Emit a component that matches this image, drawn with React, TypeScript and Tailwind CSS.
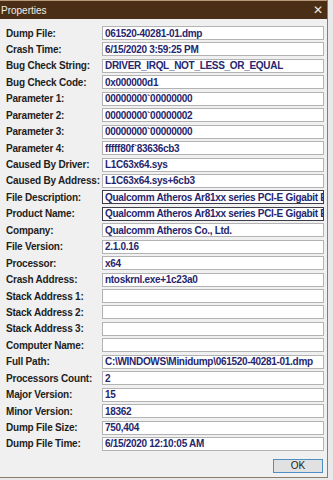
import React from "react";

const rows: [string, string, boolean?][] = [
  ["Dump File:", "061520-40281-01.dmp"],
  ["Crash Time:", "6/15/2020 3:59:25 PM"],
  ["Bug Check String:", "DRIVER_IRQL_NOT_LESS_OR_EQUAL"],
  ["Bug Check Code:", "0x000000d1"],
  ["Parameter 1:", "00000000`00000000"],
  ["Parameter 2:", "00000000`00000002"],
  ["Parameter 3:", "00000000`00000000"],
  ["Parameter 4:", "fffff80f`83636cb3"],
  ["Caused By Driver:", "L1C63x64.sys"],
  ["Caused By Address:", "L1C63x64.sys+6cb3"],
  ["File Description:", "Qualcomm Atheros Ar81xx series PCI-E Gigabit Ethernet Controller (NDIS 6.30)", true],
  ["Product Name:", "Qualcomm Atheros Ar81xx series PCI-E Gigabit Ethernet Controller (NDIS 6.30)", true],
  ["Company:", "Qualcomm Atheros Co., Ltd."],
  ["File Version:", "2.1.0.16"],
  ["Processor:", "x64"],
  ["Crash Address:", "ntoskrnl.exe+1c23a0"],
  ["Stack Address 1:", ""],
  ["Stack Address 2:", ""],
  ["Stack Address 3:", ""],
  ["Computer Name:", ""],
  ["Full Path:", "C:\\WINDOWS\\Minidump\\061520-40281-01.dmp"],
  ["Processors Count:", "2"],
  ["Major Version:", "15"],
  ["Minor Version:", "18362"],
  ["Dump File Size:", "750,404"],
  ["Dump File Time:", "6/15/2020 12:10:05 AM"],
];

export default function App() {
  return (
    <div className="w-[333px] h-[480px] bg-[#e9e9e9] overflow-hidden" style={{ fontFamily: '"Liberation Sans", Arial, sans-serif' }}>
      <div className="w-[328px] h-[478px] bg-[#f0f0f0] border-r border-b border-[#8a7b6c] flex flex-col">
        {/* title bar */}
        <div className="h-[19px] bg-[#4a2f16] border-t border-[#b89a78] flex items-center justify-between pl-[1px] pr-[4px]">
          <span className="text-[10px] text-[#f3ece4]">Properties</span>
          <span className="text-[12px] text-[#efe6dc] leading-none">✕</span>
        </div>

        <div className="flex flex-col gap-[2.44px] pt-[7px] pl-[6px]">
          {rows.map(([label, value, dark]) => (
            <div key={label} className="flex items-center h-[14px]">
              <span className="w-[96px] text-[10px] font-bold text-[#1e1e1e] tracking-[-0.2px] whitespace-nowrap">{label}</span>
              <div
                className={`w-[222px] h-[14px] bg-white border overflow-hidden whitespace-nowrap flex items-center pl-[2px] ${dark ? "border-[#3d3d4a]" : "border-[#b3b3b3]"}`}
              >
                <span className="text-[10px] font-bold text-[#26266e] tracking-[-0.3px]">{value}</span>
              </div>
            </div>
          ))}
        </div>

        <div className="flex justify-end pr-[4px] mt-[8px]">
          <button className="w-[50px] h-[14px] bg-[#e1e1e1] border border-[#4d8fc4] text-[10px] text-[#222] flex items-center justify-center">
            OK
          </button>
        </div>
      </div>
    </div>
  );
}
